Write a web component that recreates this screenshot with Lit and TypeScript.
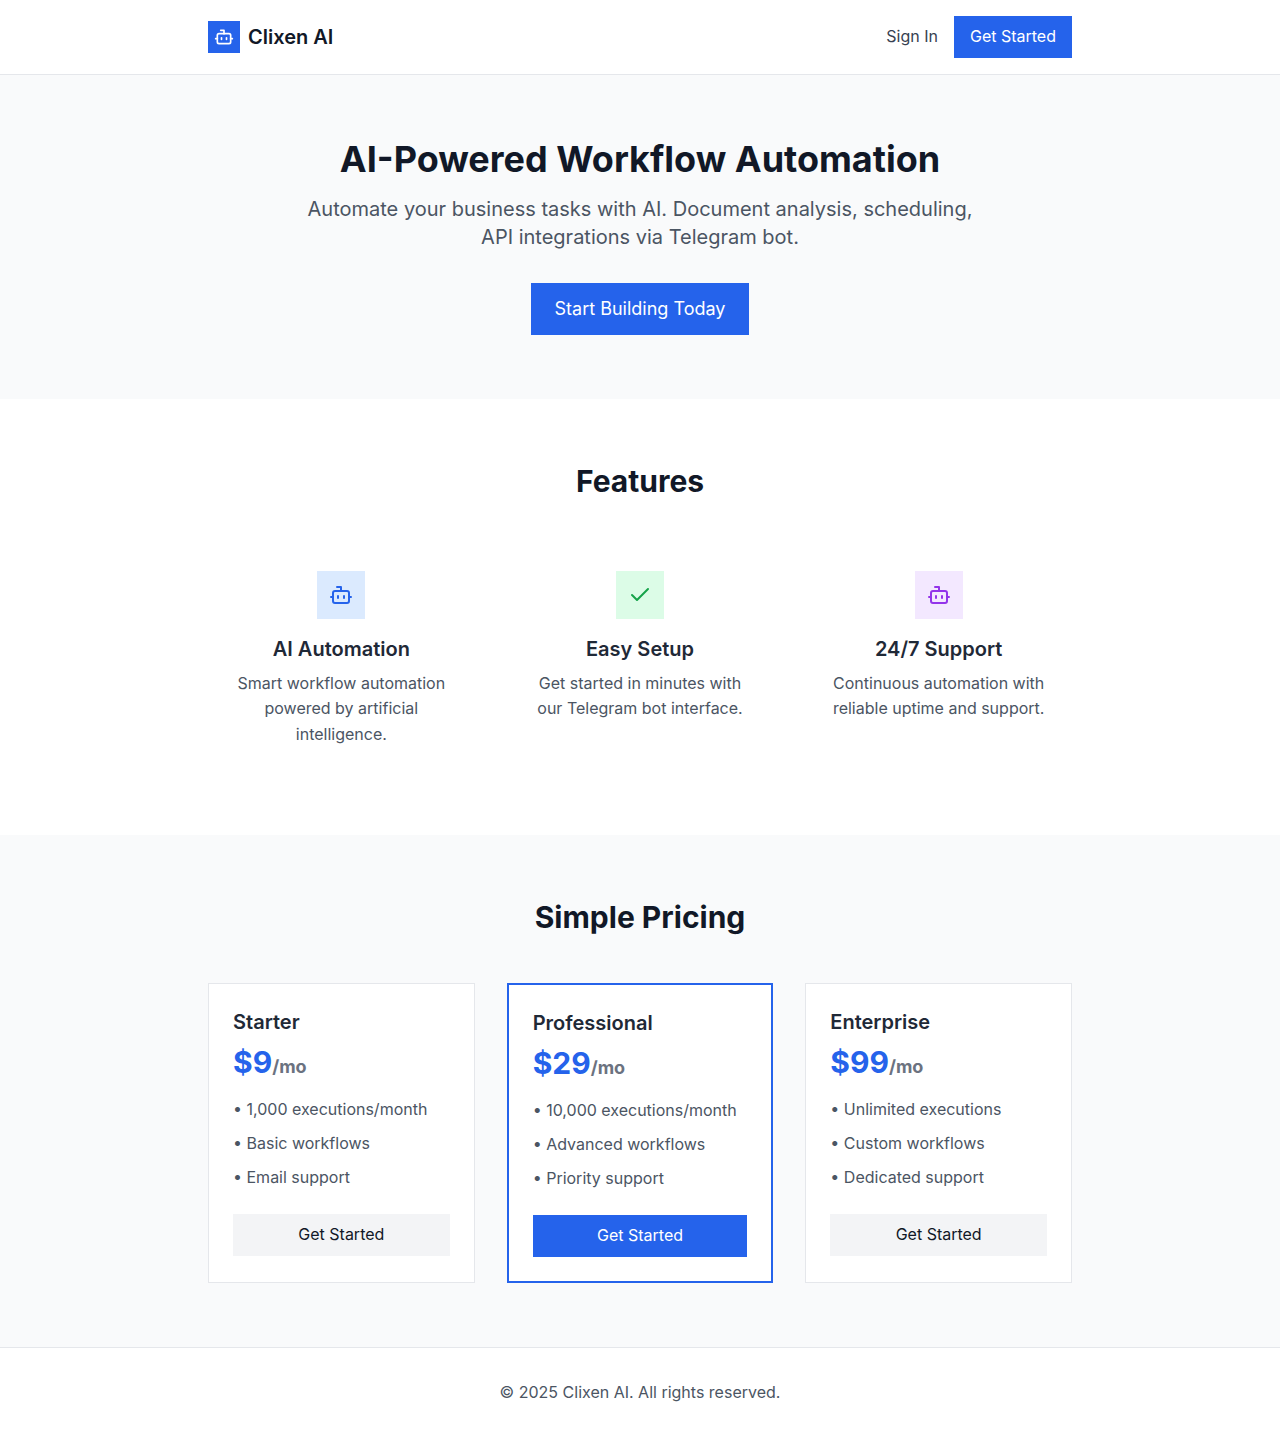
import { LitElement, html, css, svg } from "lit";
import { customElement } from "lit/decorators.js";

const bot = html`<svg viewBox="0 0 24 24">${svg`<path d="M12 8V4H8"/><rect width="16" height="12" x="4" y="8" rx="2"/><path d="M2 14h2"/><path d="M20 14h2"/><path d="M15 13v2"/><path d="M9 13v2"/>`}</svg>`;
const check = html`<svg viewBox="0 0 24 24"><path d="M20 6 9 17l-5-5"/></svg>`;

const features = [
  { tone: "blue", icon: bot, title: "AI Automation", text: "Smart workflow automation powered by artificial intelligence." },
  { tone: "green", icon: check, title: "Easy Setup", text: "Get started in minutes with our Telegram bot interface." },
  { tone: "purple", icon: bot, title: "24/7 Support", text: "Continuous automation with reliable uptime and support." },
];

const plans = [
  { name: "Starter", price: "$9", items: ["1,000 executions/month", "Basic workflows", "Email support"], main: false },
  { name: "Professional", price: "$29", items: ["10,000 executions/month", "Advanced workflows", "Priority support"], main: true },
  { name: "Enterprise", price: "$99", items: ["Unlimited executions", "Custom workflows", "Dedicated support"], main: false },
];

@customElement("app-root")
export class AppRoot extends LitElement {
  static styles = css`
    :host {
      display: block;
      background: #fff;
      color: #111827;
      font: 400 16px/1.6 Inter, sans-serif;
    }
    * { box-sizing: border-box; margin: 0; padding: 0; }
    svg {
      display: block;
      fill: none;
      stroke: currentColor;
      stroke-width: 2;
      stroke-linecap: round;
      stroke-linejoin: round;
    }
    button { font: inherit; border: 0; cursor: pointer; }
    .wrap { width: 896px; margin: 0 auto; padding: 0 16px; }
    header { border-bottom: 1px solid #e5e7eb; }
    .bar { display: flex; justify-content: space-between; align-items: center; padding-top: 16px; padding-bottom: 16px; }
    .brand { display: flex; align-items: center; gap: 8px; font-size: 20px; font-weight: 600; line-height: 28px; }
    .logo { width: 32px; height: 32px; background: #2563eb; color: #fff; display: grid; place-items: center; }
    .logo svg { width: 20px; height: 20px; }
    .nav { display: flex; align-items: center; gap: 16px; color: #374151; }
    .btn { background: #2563eb; color: #fff; padding: 8px 16px; }
    .btn.big { display: block; margin: 0 auto; font-size: 18px; line-height: 28px; padding: 12px 24px; }
    .hero { background: #f9fafb; padding: 64px 0; text-align: center; }
    h1 { font-size: 36px; line-height: 40px; font-weight: 700; margin-bottom: 16px; }
    .lead { width: 672px; margin: 0 auto 32px; font-size: 20px; line-height: 28px; color: #4b5563; }
    section { padding: 64px 0; }
    h2 { font-size: 30px; line-height: 36px; font-weight: 700; text-align: center; margin-bottom: 48px; }
    .grid { display: grid; grid-template-columns: repeat(3, 1fr); gap: 32px; }
    .feature { padding: 24px; text-align: center; }
    .tile { width: 48px; height: 48px; margin: 0 auto 16px; display: grid; place-items: center; }
    .tile svg { width: 24px; height: 24px; }
    .blue { background: #dbeafe; color: #2563eb; }
    .green { background: #dcfce7; color: #16a34a; }
    .purple { background: #f3e8ff; color: #9333ea; }
    h3 { font-size: 20px; line-height: 28px; font-weight: 600; color: #1f2937; margin-bottom: 8px; }
    .feature p { color: #4b5563; }
    .pricing { background: #f9fafb; }
    .plan { background: #fff; border: 1px solid #e5e7eb; padding: 24px; }
    .plan.main { border: 2px solid #2563eb; }
    .price { font-size: 30px; line-height: 36px; font-weight: 700; color: #2563eb; margin-bottom: 16px; }
    .price span { font-size: 18px; line-height: 28px; color: #6b7280; }
    ul { list-style: none; display: grid; gap: 8px; margin-bottom: 24px; color: #4b5563; }
    .wide { width: 100%; }
    .soft { background: #f3f4f6; color: #111827; }
    footer { border-top: 1px solid #e5e7eb; padding: 32px 0; text-align: center; color: #4b5563; }
  `;

  render() {
    return html`
      <header>
        <div class="wrap bar">
          <div class="brand"><span class="logo">${bot}</span><span>Clixen AI</span></div>
          <nav class="nav"><span>Sign In</span><button class="btn">Get Started</button></nav>
        </div>
      </header>
      <div class="hero">
        <h1>AI-Powered Workflow Automation</h1>
        <p class="lead">Automate your business tasks with AI. Document analysis, scheduling, API integrations via Telegram bot.</p>
        <button class="btn big">Start Building Today</button>
      </div>
      <section>
        <div class="wrap">
          <h2>Features</h2>
          <div class="grid">
            ${features.map((f) => html`<div class="feature">
              <div class="tile ${f.tone}">${f.icon}</div>
              <h3>${f.title}</h3>
              <p>${f.text}</p>
            </div>`)}
          </div>
        </div>
      </section>
      <section class="pricing">
        <div class="wrap">
          <h2>Simple Pricing</h2>
          <div class="grid">
            ${plans.map((p) => html`<div class="plan ${p.main ? "main" : ""}">
              <h3>${p.name}</h3>
              <div class="price">${p.price}<span>/mo</span></div>
              <ul>${p.items.map((i) => html`<li>• ${i}</li>`)}</ul>
              <button class="btn wide ${p.main ? "" : "soft"}">Get Started</button>
            </div>`)}
          </div>
        </div>
      </section>
      <footer>© 2025 Clixen AI. All rights reserved.</footer>
    `;
  }
}
